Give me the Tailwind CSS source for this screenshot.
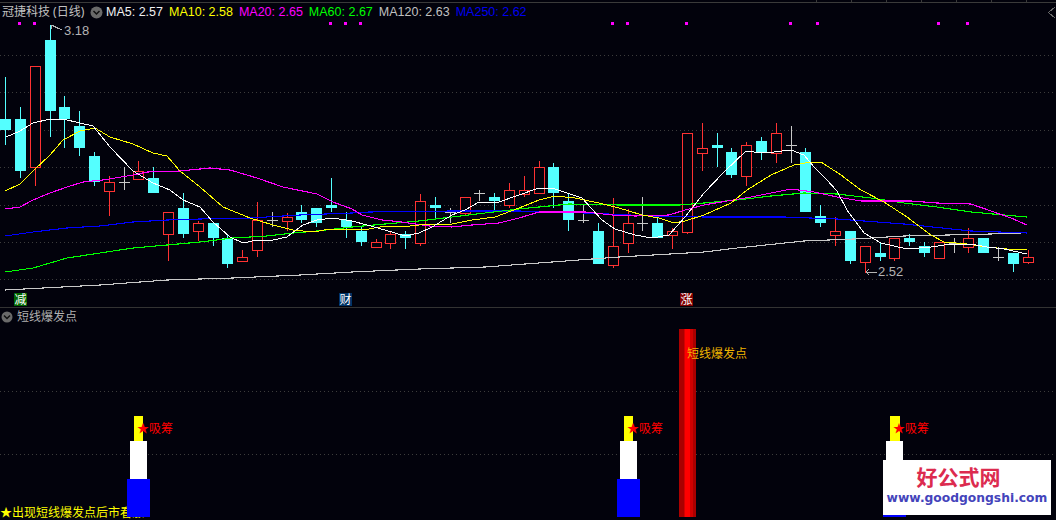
<!DOCTYPE html>
<html lang="zh">
<head>
<meta charset="utf-8">
<title>短线爆发点</title>
<script src="https://cdn.jsdelivr.net/npm/@tailwindcss/browser@4"></script>
</head>
<body class="bg-[#02020c]">
<div class="w-[1056px] h-[520px] overflow-hidden flex flex-col bg-[#02020c] font-['Noto_Sans','Noto_Sans_CJK_SC',sans-serif]">

  <!-- price panel -->
  <section class="relative h-[308px] shrink-0 border-b border-[#333333]">
    <svg class="absolute left-0 top-0 w-[1056px] h-[307px]" viewBox="0 0 1056 307" shape-rendering="crispEdges" fill="none">
      <path stroke="#3a3a3a" d="M0 2.500H1056M816.500 0V2M851.500 0V2M886.500 0V2M921.500 0V2M956.500 0V2M991.500 0V2M1026.500 0V2"/>
      <path stroke="#6a6a6a" d="M1055 7L1048.500 12.500L1055 18"/>
      <path stroke="#3c3c3c" stroke-dasharray="1 3" d="M0 55.500H1056M0 92.500H1056M0 130.500H1056M0 167.500H1056M0 205.500H1056M0 242.500H1056M0 279.500H1056"/>
      <path fill="#ff00ff" d="M18 22h3v3h-3zM33 22h3v3h-3zM329 22h3v3h-3zM344 22h3v3h-3zM359 22h3v3h-3zM611 22h3v3h-3zM626 22h3v3h-3zM685 22h3v3h-3zM789 22h3v3h-3zM937 22h3v3h-3zM966 22h3v3h-3zM816 22h3v3h-3z"/>
      <!-- gray doji -->
      <path stroke="#c8c8c8" d="M124.500 167V190M119 182.500H130M272.500 212V227M267 220.500H278M450.500 208V223M445 212.500H456M479.500 190V201M474 193.500H485M583.500 205V223M578 220.500H589M642.500 197V231M637 223.500H648M791.500 126V163M786 145.500H797M954.500 238V253M949 243.500H960M998.500 247V261M993 257.500H1004"/>
      <!-- cyan wicks -->
      <path stroke="#54ffff" d="M5.500 77V145M20.500 107V178M50.500 25V137M64.500 96V148M79.500 111V156M94.500 152V186M153.500 167V178M183.500 193V238M213.500 223V246M227.500 235V268M301.500 205V223M316.500 208V227M331.500 178V212M346.500 212V238M361.500 226V246M405.500 231V249M435.500 197V219M494.500 193V211M553.500 163V208M568.500 193V231M598.500 223V231M657.500 217V223M717.500 133V167M731.500 148V178M761.500 137V160M805.500 148V152M820.500 205V227M850.500 261V264M880.500 243V261M909.500 234V246M924.500 242V257M1013.500 264V272"/>
      <!-- cyan bodies -->
      <path fill="#54ffff" d="M0 119h11v11h-11zM15 119h11v52h-11zM45 40h11v71h-11zM59 107h11v12h-11zM74 126h11v22h-11zM89 156h11v26h-11zM148 178h11v15h-11zM178 208h11v26h-11zM208 223h11v15h-11zM222 238h11v26h-11zM296 212h11v8h-11zM311 208h11v15h-11zM326 205h11v3h-11zM341 220h11v7h-11zM356 231h11v11h-11zM400 234h11v4h-11zM430 205h11v3h-11zM489 197h11v4h-11zM548 167h11v26h-11zM563 201h11v19h-11zM593 231h11v33h-11zM652 223h11v15h-11zM712 145h11v3h-11zM726 152h11v23h-11zM756 141h11v11h-11zM800 152h11v60h-11zM815 216h11v7h-11zM845 231h11v30h-11zM875 253h11v4h-11zM904 238h11v4h-11zM919 246h11v7h-11zM978 238h11v15h-11zM1008 253h11v11h-11z"/>
      <!-- red wicks -->
      <path stroke="#ff3232" d="M35.500 167V186M109.500 176V216M138.500 161V171M168.500 234V261M198.500 221V241M242.500 250V257M257.500 202V257M287.500 213V231M376.500 239V242M390.500 232V249M420.500 194V246M465.500 197V216M509.500 183V208M524.500 176V197M539.500 161V167M613.500 198V268M628.500 209V253M672.500 228V249M687.500 232V234M702.500 123V171M746.500 142V186M776.500 123V163M835.500 217V246M865.500 262V273M894.500 258V261M968.500 228V253M1028.500 250V264"/>
      <!-- red bodies -->
      <path stroke="#ff3232" fill="#02020c" d="M30.500 66.500h10v101h-10zM104.500 182.500h10v9h-10zM133.500 171.500h10v8h-10zM163.500 212.500h10v22h-10zM193.500 223.500h10v8h-10zM237.500 257.500h10v4h-10zM252.500 220.500h10v30h-10zM282.500 217.500h10v4h-10zM371.500 242.500h10v5h-10zM385.500 234.500h10v9h-10zM415.500 201.500h10v42h-10zM460.500 197.500h10v16h-10zM504.500 190.500h10v15h-10zM519.500 190.500h10v4h-10zM534.500 167.500h10v26h-10zM608.500 246.500h10v19h-10zM623.500 223.500h10v20h-10zM667.500 231.500h10v4h-10zM682.500 133.500h10v99h-10zM697.500 148.500h10v5h-10zM741.500 145.500h10v31h-10zM771.500 133.500h10v20h-10zM830.500 231.500h10v4h-10zM860.500 246.500h10v16h-10zM889.500 238.500h10v20h-10zM934.500 242.500h10v16h-10zM963.500 238.500h10v9h-10zM1023.500 257.500h10v5h-10z"/>
      <!-- moving averages -->
      <polyline stroke="#c8c8c8" stroke-width="1.100" points="5,290 43,288 100,285 167,280 233,278 300,275 352,272 419,269 485,267 552,262 619,257 704,252 737,248 804,241 854,239 904,236 991,234 1021,233"/>
      <polyline stroke="#0000ff" stroke-width="1.100" points="5,236 33,232 67,228 100,226 133,222 167,220 200,219 250,218 300,215 352,213 369,212 452,211 519,211 585,213 652,216 704,217 784,217 837,219 904,224 971,231 1027,233"/>
      <polyline stroke="#00ff00" stroke-width="1.100" points="5,272 33,268 67,258 100,253 133,248 167,245 200,242 233,238 267,236 293,233 317,231 352,227 385,224 419,221 452,217 485,213 519,209 539,207 569,204 619,205 679,205 704,203 737,200 771,196 804,193 837,194 871,198 904,203 937,207 971,212 1004,215 1027,217"/>
      <polyline stroke="#ff00ff" stroke-width="1.100" points="5,209 20,207 33,200 50,193 67,187 83,182 103,180 133,175 147,172 180,171 210,168 230,170 257,178 283,187 317,194 333,202 352,209 362,215 382,220 402,222 429,226 452,227 472,225 499,223 519,218 539,212 559,212 585,212 612,215 635,216 669,215 685,210 704,205 727,201 751,197 771,193 791,189 814,192 837,197 861,201 887,201 911,201 937,203 971,204 991,211 1011,218 1027,225"/>
      <polyline stroke="#ffff00" points="5,191 20,184 33,171 50,155 63,140 80,131 95,128 110,137 133,144 153,153 167,156 180,171 200,187 223,207 250,218 273,225 293,230 313,232 330,229 352,230 369,229 385,226 402,227 419,225 435,224 452,224 472,220 495,217 519,208 539,200 555,196 575,198 599,203 619,208 642,215 659,218 674,223 685,221 704,215 731,203 747,190 771,175 794,165 811,162 821,162 841,175 861,190 884,202 907,217 931,235 944,242 967,244 987,247 1007,249 1027,249"/>
      <polyline stroke="#ffffff" points="6,137 20,131 33,123 50,119 63,119 80,123 93,126 110,147 133,171 153,183 170,190 183,200 200,207 213,222 230,237 243,243 257,240 273,240 287,237 303,225 317,220 333,218 352,221 367,225 385,230 405,236 419,233 432,227 452,215 465,210 479,202 499,202 519,195 539,188 555,189 582,198 602,220 615,229 635,235 652,238 669,235 685,217 704,193 724,172 746,151 761,153 774,152 791,150 804,155 814,167 827,180 837,191 847,210 864,233 881,243 907,249 931,247 951,244 971,244 987,247 1004,249 1027,254"/>
      <!-- high / low arrows -->
      <path stroke="#b4b4b4" d="M51 25L62 30M51 25H54M51 25V29M866 272H877M866 272L869 269M866 272L869 275"/>
    </svg>

    <!-- legend -->
    <header class="relative flex items-center h-[24px] pl-[2px] whitespace-nowrap">
      <span class="text-[#c0c0c0] w-[88px] text-[12px] leading-[24px]">冠捷科技 (日线)</span>
      <svg class="w-[13px] h-[13px] shrink-0 mr-[3px]" viewBox="0 0 13 13"><circle cx="6.500" cy="6.500" r="6" fill="#6a6a6a"/><path d="M3.500 5L6.500 8L9.500 5" fill="none" stroke="#101010" stroke-width="1.500"/></svg>
      <div class="flex gap-[6px] text-[12.500px] leading-[24px] font-['Liberation_Sans',sans-serif]">
        <span class="text-[#f0f0f0]">MA5: 2.57</span>
        <span class="text-[#ffff00]">MA10: 2.58</span>
        <span class="text-[#ff00ff]">MA20: 2.65</span>
        <span class="text-[#00ff00]">MA60: 2.67</span>
        <span class="text-[#c0c0c0]">MA120: 2.63</span>
        <span class="text-[#0000f0]">MA250: 2.62</span>
      </div>
    </header>

    <!-- labels pinned to the chart -->
    <span class="absolute left-[64px] top-[22px] text-[13px] leading-[18px] text-[#b4b4b4] font-['Liberation_Sans',sans-serif]">3.18</span>
    <span class="absolute left-[878px] top-[263px] text-[13px] leading-[18px] text-[#b4b4b4] font-['Liberation_Sans',sans-serif]">2.52</span>
    <span class="absolute left-[14px] top-[293px] w-[13px] h-[13px] bg-[#006600] text-white text-[12px] leading-[13px] text-center">减</span>
    <span class="absolute left-[339px] top-[293px] w-[13px] h-[13px] bg-[#003366] text-white text-[12px] leading-[13px] text-center">财</span>
    <span class="absolute left-[680px] top-[293px] w-[13px] h-[13px] bg-[#7f0000] text-white text-[12px] leading-[13px] text-center">涨</span>
  </section>

  <!-- indicator panel -->
  <section class="relative flex-1">
    <svg class="absolute left-0 top-0 w-[1056px] h-[212px]" viewBox="0 308 1056 212" shape-rendering="crispEdges" fill="none">
      <path stroke="#3c3c3c" stroke-dasharray="1 3" d="M0 391.500H1056M0 454.500H1056"/>
    </svg>

    <header class="relative flex items-center h-[16px] mt-[1px] pl-[1px] gap-[4px]">
      <svg class="w-[12px] h-[12px] shrink-0" viewBox="0 0 12 12"><circle cx="6" cy="6" r="5.500" fill="#6a6a6a"/><path d="M3 4.500L6 7.500L9 4.500" fill="none" stroke="#101010" stroke-width="1.500"/></svg>
      <span class="text-[12px] leading-[16px] text-[#b0b0b0]">短线爆发点</span>
    </header>

    <span class="absolute left-0 top-[197px] text-[12px] leading-[16px] text-[#ffff00] whitespace-nowrap">★出现短线爆发点后市看涨</span>

    <!-- signal bars -->
    <div class="absolute left-[134px] top-[108px] w-[9px] h-[25px] bg-[#ffff00]"></div>
    <div class="absolute left-[130px] top-[133px] w-[17px] h-[39px] bg-white"></div>
    <div class="absolute left-[127px] top-[171px] w-[23px] h-[38px] bg-[#0000ff]"></div>

    <div class="absolute left-[624px] top-[108px] w-[9px] h-[25px] bg-[#ffff00]"></div>
    <div class="absolute left-[620px] top-[133px] w-[17px] h-[39px] bg-white"></div>
    <div class="absolute left-[617px] top-[171px] w-[23px] h-[38px] bg-[#0000ff]"></div>

    <div class="absolute left-[890px] top-[108px] w-[10px] h-[25px] bg-[#ffff00]"></div>
    <div class="absolute left-[886px] top-[133px] w-[17px] h-[39px] bg-white"></div>
    <div class="absolute left-[883px] top-[171px] w-[23px] h-[38px] bg-[#0000ff]"></div>

    <span class="absolute left-[137px] top-[113px] text-[12px] leading-[16px] text-[#ff0000] whitespace-nowrap">★吸筹</span>
    <span class="absolute left-[627px] top-[113px] text-[12px] leading-[16px] text-[#ff0000] whitespace-nowrap">★吸筹</span>
    <span class="absolute left-[893px] top-[113px] text-[12px] leading-[16px] text-[#ff0000] whitespace-nowrap">★吸筹</span>

    <!-- burst column -->
    <div class="absolute left-[679px] top-[21px] h-[188px] w-[17px] flex">
      <div class="w-[5px] bg-[#aa0000]"></div>
      <div class="w-[1px] bg-[#d40000]"></div>
      <div class="w-[5px] bg-[#ff0000]"></div>
      <div class="w-[3px] bg-[#d00000]"></div>
      <div class="w-[3px] bg-[#aa0000]"></div>
    </div>
    <span class="absolute left-[687px] top-[38px] text-[12px] leading-[16px] text-[#f0b400] whitespace-nowrap">短线爆发点</span>

    <!-- watermark -->
    <div class="absolute left-[883px] top-[152px] w-[168px] h-[55px] bg-white flex flex-col items-center pt-[3px]">
      <span class="font-['Noto_Sans_CJK_SC',sans-serif] font-bold text-[21px] leading-[27px] text-[#dc2b4f] ml-[-17px]">好公式网</span>
      <span class="font-['DejaVu_Sans',sans-serif] font-bold text-[12.300px] leading-[17px] text-[#4444bb] whitespace-nowrap">www.goodgongshi.com</span>
    </div>
  </section>
</div>
</body>
</html>
